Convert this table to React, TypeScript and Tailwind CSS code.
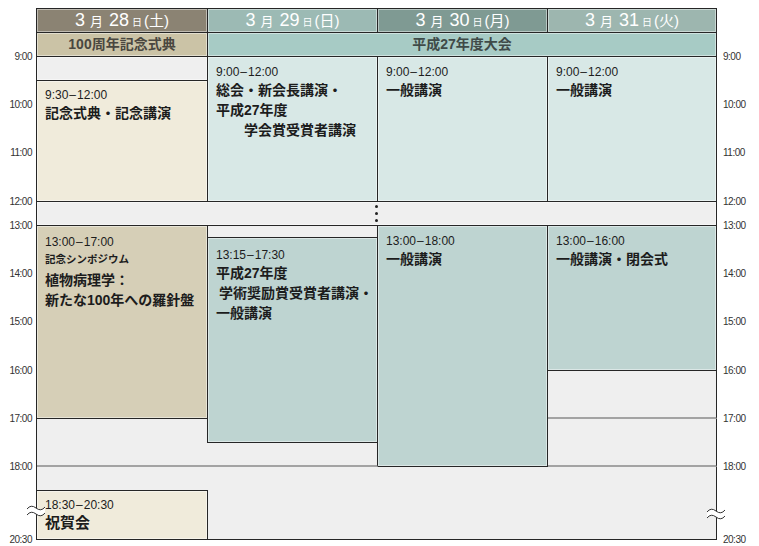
import React from "react";

const font = "font-['Liberation_Sans','Noto_Sans_CJK_JP',sans-serif]";

const leftLabels = [
  { t: "9:00", h: "h-[48px]" },
  { t: "10:00", h: "h-[48px]" },
  { t: "11:00", h: "h-[49px]" },
  { t: "12:00", h: "h-[24px]" },
  { t: "13:00", h: "h-[48px]" },
  { t: "14:00", h: "h-[48px]" },
  { t: "15:00", h: "h-[49px]" },
  { t: "16:00", h: "h-[48px]" },
  { t: "17:00", h: "h-[48px]" },
  { t: "18:00", h: "h-[73px]" },
  { t: "20:30", h: "h-[12px]" },
];

function TimeAxis({ side }: { side: "left" | "right" }) {
  return (
    <div className={side === "left" ? "w-[36px] flex flex-col pt-[51px] pr-[4px] items-end" : "w-[42px] flex flex-col pt-[51px] pl-[6px] items-start"}>
      {leftLabels.map((l) => (
        <div key={l.t} className={`${l.h} text-[10px] leading-[12px] tracking-[-0.5px] text-[#333]`}>
          {l.t}
        </div>
      ))}
    </div>
  );
}

function DayHead({ d, w }: { d: string; w: string }) {
  return (
    <div className="flex items-baseline justify-center text-white">
      <span className="text-[18px] leading-[22px]">3</span>
      <span className="text-[13px] ml-[5px]">月</span>
      <span className="text-[18px] leading-[22px] ml-[6px]">{d}</span>
      <span className="text-[10px] ml-[3px]">日</span>
      <span className="text-[15px] ml-[2px]">({w})</span>
    </div>
  );
}

function Time({ t }: { t: string }) {
  const [a, b] = t.split("–");
  return (
    <div className="text-[12px] leading-[16px]">
      {a}
      <span className="mx-[1px]">–</span>
      {b}
    </div>
  );
}

function Ev({ time, children, className = "" }: { time: string; children: React.ReactNode; className?: string }) {
  return (
    <div className={`pl-[8px] pt-[6px] text-[#1c1c1c] ${className}`}>
      <Time t={time} />
      <div className="text-[14px] leading-[20px] font-bold">{children}</div>
    </div>
  );
}

const inset = "shadow-[inset_0_0_0_1px_rgba(255,255,255,0.45)]";
const dark = "border-[#262626]";

export default function App() {
  return (
    <div className={`w-[759px] h-[546px] bg-white flex items-start ${font}`}>
      <TimeAxis side="left" />

      <div className="relative mt-[8px]">
        <div
          className={`grid grid-cols-[171px_170px_170px_169px] grid-rows-[24px_24px_24px_121px_24px_12px_133px_48px_24px_24px_24px_49px] border-t border-l ${dark} bg-[#efefef]`}
        >
          {/* day headers */}
          <div className={`col-start-1 row-start-1 border-r border-b ${dark} bg-[#8b8373] ${inset}`}>
            <DayHead d="28" w="土" />
          </div>
          <div className={`col-start-2 row-start-1 border-r border-b ${dark} bg-[#9cbab4] ${inset}`}>
            <DayHead d="29" w="日" />
          </div>
          <div className={`col-start-3 row-start-1 border-r border-b ${dark} bg-[#7f9a93] ${inset}`}>
            <DayHead d="30" w="月" />
          </div>
          <div className={`col-start-4 row-start-1 border-r border-b ${dark} bg-[#9db6af] ${inset}`}>
            <DayHead d="31" w="火" />
          </div>

          {/* sub headers */}
          <div className={`col-start-1 row-start-2 border-r border-b ${dark} bg-[#cbc3a6] ${inset} flex items-center justify-center text-[14px] font-bold text-[#4a4740]`}>
            100周年記念式典
          </div>
          <div className={`col-start-2 col-span-3 row-start-2 border-r border-b ${dark} bg-[#a7cbc5] ${inset} flex items-center justify-center text-[14px] font-bold text-[#3f4a48]`}>
            平成27年度大会
          </div>

          {/* 28 */}
          <div className={`col-start-1 row-start-3 border-r border-b ${dark} ${inset}`} />
          <div className={`col-start-1 row-start-4 border-r border-b ${dark} bg-[#f0ebdb] ${inset}`}>
            <Ev time="9:30–12:00">記念式典・記念講演</Ev>
          </div>

          {/* 29-31 morning */}
          <div className={`col-start-2 row-start-3 row-span-2 border-r border-b ${dark} bg-[#d8e8e6] ${inset}`}>
            <Ev time="9:00–12:00" className="pt-[7px]">
              <div>総会・新会長講演・</div>
              <div>平成27年度</div>
              <div className="pl-[28px]">学会賞受賞者講演</div>
            </Ev>
          </div>
          <div className={`col-start-3 row-start-3 row-span-2 border-r border-b ${dark} bg-[#d8e8e6] ${inset}`}>
            <Ev time="9:00–12:00" className="pt-[7px]">一般講演</Ev>
          </div>
          <div className={`col-start-4 row-start-3 row-span-2 border-r border-b ${dark} bg-[#d8e8e6] ${inset}`}>
            <Ev time="9:00–12:00" className="pt-[7px]">一般講演</Ev>
          </div>

          {/* lunch break */}
          <div className={`col-start-1 col-span-4 row-start-5 border-r border-b ${dark} ${inset} flex flex-col items-center justify-center gap-[4px] pr-[1px]`}>
            <span className="w-[3px] h-[3px] rounded-full bg-[#222]" />
            <span className="w-[3px] h-[3px] rounded-full bg-[#222]" />
            <span className="w-[3px] h-[3px] rounded-full bg-[#222]" />
          </div>

          {/* 28 afternoon */}
          <div className={`col-start-1 row-start-6 row-span-3 border-r border-b ${dark} bg-[#d6cfb7] ${inset} pl-[8px] pt-[8px] text-[#1c1c1c]`}>
            <Time t="13:00–17:00" />
            <div className="text-[10.5px] leading-[18px] font-bold">記念シンポジウム</div>
            <div className="text-[14px] leading-[20px] font-bold mt-[2px]">植物病理学：</div>
            <div className="text-[14px] leading-[20px] font-bold">新たな100年への羅針盤</div>
          </div>
          <div className={`col-start-1 row-start-9 border-r ${dark}`} />
          <div className="col-start-1 row-start-10 border-b-2 border-[#a3a3a3]" />
          <div className={`col-start-1 row-start-11 border-b ${dark}`} />
          <div className={`col-start-1 row-start-12 border-r border-b ${dark} bg-[#f0ebdb] ${inset}`}>
            <Ev time="18:30–20:30" className="pt-[5px]">
              <span className="text-[15px]">祝賀会</span>
            </Ev>
          </div>

          {/* 29 afternoon */}
          <div className={`col-start-2 row-start-6 border-r border-b ${dark}`} />
          <div className={`col-start-2 row-start-7 row-span-3 border-r border-b ${dark} bg-[#bed4d1] ${inset}`}>
            <Ev time="13:15–17:30" className="pt-[9px]">
              <div>平成27年度</div>
              <div className="pl-[3px]">学術奨励賞受賞者講演・</div>
              <div>一般講演</div>
            </Ev>
          </div>
          <div className={`col-start-2 row-start-10 border-r ${dark} border-b-2 border-b-[#a3a3a3]`} />

          {/* 30 afternoon */}
          <div className={`col-start-3 row-start-6 row-span-5 border-r border-b ${dark} bg-[#bed4d1] ${inset}`}>
            <Ev time="13:00–18:00" className="pt-[7px]">一般講演</Ev>
          </div>

          {/* 31 afternoon */}
          <div className={`col-start-4 row-start-6 row-span-2 border-r border-b ${dark} bg-[#bed4d1] ${inset}`}>
            <Ev time="13:00–16:00" className="pt-[7px]">一般講演・閉会式</Ev>
          </div>
          <div className={`col-start-4 row-start-8 border-r ${dark} border-b-2 border-b-[#a3a3a3]`} />
          <div className={`col-start-4 row-start-9 row-span-2 border-r ${dark} border-b-2 border-b-[#a3a3a3]`} />

          {/* evening */}
          <div className={`col-start-2 col-span-3 row-start-11 row-span-2 border-r border-b ${dark}`} />
        </div>

        {/* time-skip marks */}
        <svg className="absolute left-[-10px] top-[496px]" width="20" height="16" viewBox="0 0 20 16">
          <path d="M1 5 Q5 0 10 4 T19 3 L19 9 Q15 13 10 10 T1 11 Z" fill="white" />
          <path d="M1 5 Q5 0 10 4 T19 3" fill="none" stroke="#333" strokeWidth="1" />
          <path d="M1 11 Q5 6 10 10 T19 9" fill="none" stroke="#333" strokeWidth="1" />
        </svg>
        <svg className="absolute left-[670px] top-[499px]" width="20" height="16" viewBox="0 0 20 16">
          <path d="M1 5 Q5 0 10 4 T19 3 L19 9 Q15 13 10 10 T1 11 Z" fill="white" />
          <path d="M1 5 Q5 0 10 4 T19 3" fill="none" stroke="#333" strokeWidth="1" />
          <path d="M1 11 Q5 6 10 10 T19 9" fill="none" stroke="#333" strokeWidth="1" />
        </svg>
      </div>

      <TimeAxis side="right" />
    </div>
  );
}
